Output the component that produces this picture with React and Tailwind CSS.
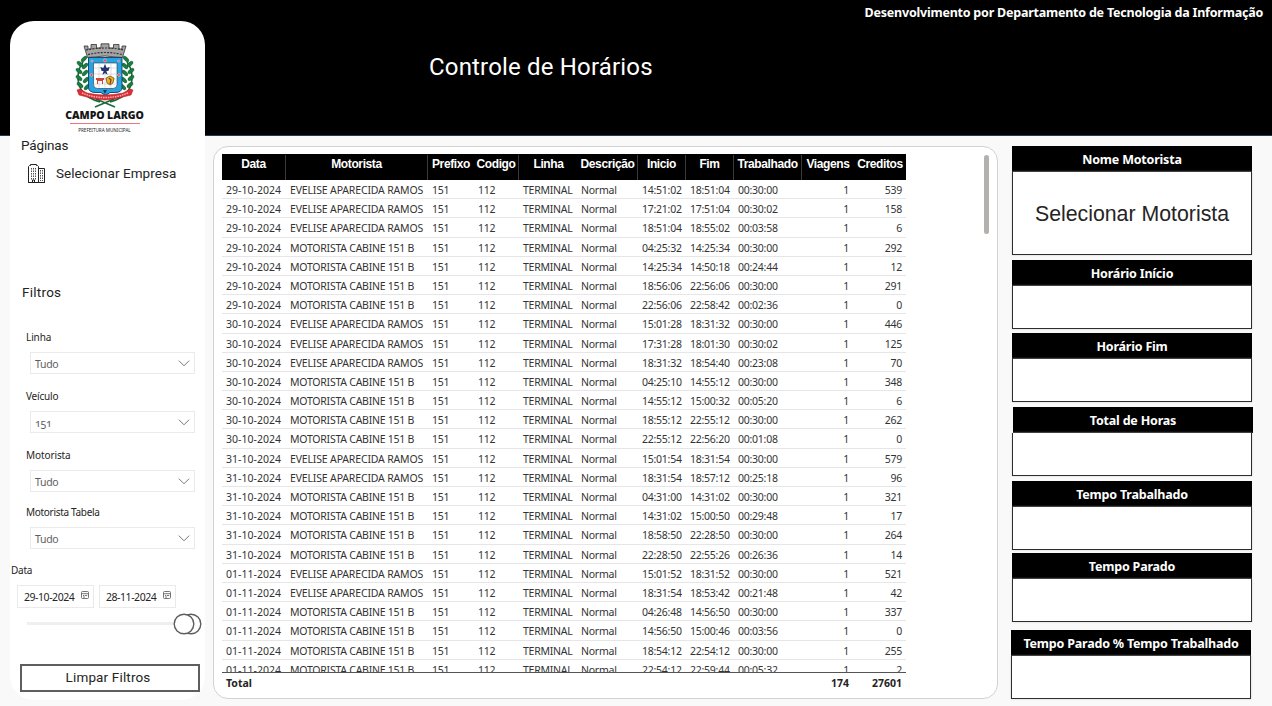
import React from "react";

const EV = "EVELISE APARECIDA RAMOS";
const MC = "MOTORISTA CABINE 151 B";

const rows = [
  ["29-10-2024", EV, "14:51:02", "18:51:04", "00:30:00", "539"],
  ["29-10-2024", EV, "17:21:02", "17:51:04", "00:30:02", "158"],
  ["29-10-2024", EV, "18:51:04", "18:55:02", "00:03:58", "6"],
  ["29-10-2024", MC, "04:25:32", "14:25:34", "00:30:00", "292"],
  ["29-10-2024", MC, "14:25:34", "14:50:18", "00:24:44", "12"],
  ["29-10-2024", MC, "18:56:06", "22:56:06", "00:30:00", "291"],
  ["29-10-2024", MC, "22:56:06", "22:58:42", "00:02:36", "0"],
  ["30-10-2024", EV, "15:01:28", "18:31:32", "00:30:00", "446"],
  ["30-10-2024", EV, "17:31:28", "18:01:30", "00:30:02", "125"],
  ["30-10-2024", EV, "18:31:32", "18:54:40", "00:23:08", "70"],
  ["30-10-2024", MC, "04:25:10", "14:55:12", "00:30:00", "348"],
  ["30-10-2024", MC, "14:55:12", "15:00:32", "00:05:20", "6"],
  ["30-10-2024", MC, "18:55:12", "22:55:12", "00:30:00", "262"],
  ["30-10-2024", MC, "22:55:12", "22:56:20", "00:01:08", "0"],
  ["31-10-2024", EV, "15:01:54", "18:31:54", "00:30:00", "579"],
  ["31-10-2024", EV, "18:31:54", "18:57:12", "00:25:18", "96"],
  ["31-10-2024", MC, "04:31:00", "14:31:02", "00:30:00", "321"],
  ["31-10-2024", MC, "14:31:02", "15:00:50", "00:29:48", "17"],
  ["31-10-2024", MC, "18:58:50", "22:28:50", "00:30:00", "264"],
  ["31-10-2024", MC, "22:28:50", "22:55:26", "00:26:36", "14"],
  ["01-11-2024", EV, "15:01:52", "18:31:52", "00:30:00", "521"],
  ["01-11-2024", EV, "18:31:54", "18:53:42", "00:21:48", "42"],
  ["01-11-2024", MC, "04:26:48", "14:56:50", "00:30:00", "337"],
  ["01-11-2024", MC, "14:56:50", "15:00:46", "00:03:56", "0"],
  ["01-11-2024", MC, "18:54:12", "22:54:12", "00:30:00", "255"],
  ["01-11-2024", MC, "22:54:12", "22:59:44", "00:05:32", "2"],
];

const grid =
  "grid grid-cols-[64px_142px_46px_45px_59px_60px_48px_48px_68px_52px_52px] w-[684px]";

const columns = [
  ["Data", true],
  ["Motorista", true],
  ["Prefixo", false],
  ["Codigo", true],
  ["Linha", false],
  ["Descrição", true],
  ["Inicio", true],
  ["Fim", true],
  ["Trabalhado", true],
  ["Viagens", false],
  ["Creditos", false],
];

function Crest() {
  return (
    <svg className="block h-[66px] w-[60px] shrink-0" viewBox="0 0 60 66">
      <path d="M8 19C2 27 1 39 7 48c4 6 11 9 18 11M52 19c6 8 7 20 1 29-4 6-11 9-18 11" fill="none" stroke="#176b3a" strokeWidth="1.6" />
      <g fill="#17803f" stroke="#0c3c22" strokeWidth=".4">
        {[[9, 16], [5, 21], [10, 23], [4, 28], [10, 30], [4, 35], [11, 37], [5, 42], [12, 44]].map(([x, y], i) => (
          <g key={i}>
            <ellipse cx={x} cy={y} rx="3.6" ry="1.8" transform={`rotate(${i % 2 ? 40 : -45} ${x} ${y})`} />
            <ellipse cx={60 - x} cy={y} rx="3.6" ry="1.8" transform={`rotate(${i % 2 ? -40 : 45} ${60 - x} ${y})`} />
          </g>
        ))}
      </g>
      <path d="M20 64 39 56M40 64 21 56" stroke="#1c6a3c" strokeWidth="1.5" />
      <path d="M9 3h4v3h3V1.500h5.500v3.500h4.500V.8h8V5h4.500V1.500H44V6h3V3h4l-3.500 11.500q-17.500-3-35 0Z" fill="#a4a4a4" stroke="#333" strokeWidth=".8" />
      <path d="M11 7q19-4 38 0M13 11.500q17-4 34 0" fill="none" stroke="#333" strokeWidth="1.200" strokeDasharray="2 1.200" />
      <path d="M13.500 14.500H47v30q0 5-7 5H35l-4.500 3-4.500-3h-5q-7.500 0-7.500-5Z" fill="#27a2e3" stroke="#123c5c" strokeWidth=".9" />
      <path d="M18.500 20H42v21.500q0 4-4 4H22.500q-4 0-4-4Z" fill="#fff" stroke="#234" strokeWidth=".6" />
      <path d="M19 25h22M19 31h22M19 36h22M19 41h22M24 20v25M30 20v25M36 20v25" stroke="#bbb" strokeWidth=".5" />
      <path d="m30 21 1.700 4 3-1-1.300 4h-2l1.200 4-2.600-2-2.600 2 1.200-4h-2l-1.300-4 3 1Z" fill="#25346e" />
      <path d="M21 35h8v2h-1v4h-1v-3h-4v3h-1v-4h-1Z" fill="#d3443d" />
      <path d="m31 35 4-2 4 2-1 5-3 2-3-2Z" fill="#e3bd20" stroke="#5d421a" strokeWidth=".7" />
      <path d="m34 35 2 2-1 4" stroke="#a52b25" strokeWidth="1.200" fill="none" />
      <g fill="#e34b42" stroke="#fff" strokeWidth=".4">
        <circle cx="30" cy="17.400" r="1.500" /><circle cx="16.500" cy="32" r="1.400" /><circle cx="44" cy="32" r="1.400" />
        <circle cx="17" cy="18" r="1" /><circle cx="43.500" cy="18" r="1" />
      </g>
      <path d="m28 47 2 4 2-4Z" fill="#183e60" />
      <path d="m2 47 3-1 7 4q18 4 36 0l7-4 3 1-2 5-8 2q-18 6-36 0l-8-2Z" fill="#df2d35" stroke="#9c1820" strokeWidth=".5" />
      <path d="m7 50 7 2.500q16 4 32 0L53 50" fill="none" stroke="#f4b8ba" strokeWidth="1.400" strokeDasharray="1.500 .9" />
    </svg>
  );
}

function Building() {
  return (
    <svg className="block h-[19px] w-[18px]" viewBox="0 0 18 19" fill="none" stroke="#222" strokeWidth="1">
      <path d="M.5 18.500v-16l1-1h1v-1h6v1h1l1 1v16M10.500 4.500h6v14h-6M0 18.500h17" />
      <path d="M3.500 4v12M5.500 4v12M7.500 4v12M12.500 6v11M14.500 6v11" strokeWidth=".8" strokeDasharray="1.500 1" />
      <path d="M4.500 18v-2h2v2" />
    </svg>
  );
}

function Calendar() {
  return (
    <svg className="-mt-[3px] block size-[8px]" viewBox="0 0 8 8" fill="none" stroke="#666" strokeWidth=".9">
      <rect x=".5" y=".5" width="7" height="7" rx="1" />
      <path d="M.5 2.700h7M2 4.500h1M3.700 4.500h2.500M2 6h2" />
    </svg>
  );
}

function Filter({ label, value, className, tracking }) {
  return (
    <div className={className}>
      <div className={`ml-[16px] h-[16px] whitespace-nowrap text-[10px] leading-[14px] text-[#252423] ${tracking}`}>{label}</div>
      <div className="ml-[20px] mt-[6px] flex h-[22px] w-[165px] items-center justify-between border border-[#eaeaea] pl-[4px] pr-[4px]">
        <span className="pt-[4px] text-[10.5px] tracking-[-0.3px] text-[#605e5c] [font-variant-numeric:oldstyle-nums]">{value}</span>
        <svg className="block h-[7px] w-[12px]" viewBox="0 0 12 7" fill="none" stroke="#777" strokeWidth="1">
          <path d="m.8.6 5.200 5.200L11.200.6" />
        </svg>
      </div>
    </div>
  );
}

function DateBox({ value }) {
  return (
    <div className="flex h-[23px] w-[77px] items-center justify-between border border-[#eaeaea] pl-[6px] pr-[4px]">
      <span className="whitespace-nowrap pt-[3px] text-[10.5px] tracking-[-0.45px] text-[#252423]">{value}</span>
      <Calendar />
    </div>
  );
}

function Sidebar() {
  return (
    <aside className="ml-[10px] mt-[21px] flex h-[679px] w-[195px] shrink-0 flex-col rounded-[24px] bg-white font-['Noto_Sans',sans-serif]">
      <div className="flex h-[114px] flex-col items-center pr-[6px] pt-[22px]">
        <Crest />
        <div className="whitespace-nowrap font-['Open_Sans',sans-serif] text-[10.5px] font-extrabold leading-[13px] tracking-[-0.08px] text-[#161616]">CAMPO LARGO</div>
        <div className="mt-[1px] h-px w-[70px] shrink-0 bg-[#e8797d]" />
        <div className="mt-[3px] whitespace-nowrap text-[4.6px] leading-[6px] text-[#222]">PREFEITURA MUNICIPAL</div>
      </div>
      <div className="ml-[11px] h-[20px] font-[Roboto,sans-serif] text-[13.5px] leading-[20px] tracking-[-0.15px] text-[#252423]">Páginas</div>
      <div className="ml-[18px] mt-[8px] flex h-[20px] items-center gap-[10px]">
        <Building />
        <span className="whitespace-nowrap font-[Roboto,sans-serif] text-[13.5px] tracking-[0.05px] text-[#252423]">Selecionar Empresa</span>
      </div>
      <div className="ml-[12px] mt-[99px] h-[20px] font-[Roboto,sans-serif] text-[13.5px] leading-[20px] tracking-[0.25px] text-[#252423]">Filtros</div>
      <Filter className="mt-[28px] h-[59px]" tracking="tracking-[-0.1px]" label="Linha" value="Tudo" />
      <Filter className="h-[59px]" tracking="tracking-[-0.2px]" label="Veículo" value="151" />
      <Filter className="h-[57px]" tracking="tracking-[-0.1px]" label="Motorista" value="Tudo" />
      <Filter className="h-[58px]" tracking="tracking-[-0.3px]" label="Motorista Tabela" value="Tudo" />
      <div className="ml-px h-[16px] text-[10px] leading-[14px] tracking-[-0.25px] text-[#252423]">Data</div>
      <div className="ml-[7px] mt-[6px] flex gap-[5px]">
        <DateBox value="29-10-2024" />
        <DateBox value="28-11-2024" />
      </div>
      <svg className="ml-[17px] mt-[5px] block h-[22px] w-[175px] shrink-0" viewBox="0 0 175 22">
        <path d="M0 10.500h150" stroke="#efefef" strokeWidth="3" />
        <circle cx="164" cy="11" r="9.800" fill="#fff" stroke="#605e5c" strokeWidth="1.400" />
        <circle cx="157" cy="11" r="9.800" fill="#fff" stroke="#605e5c" strokeWidth="1.400" />
      </svg>
      <button className="ml-[10px] mt-[29px] flex h-[28px] w-[180px] justify-center border-2 border-[#605e5c] bg-white pr-[4px] font-[Roboto,sans-serif] text-[13.5px] leading-[22px] tracking-[0.15px] text-[#252423]">Limpar Filtros</button>
    </aside>
  );
}

function TableCard() {
  return (
    <section className="ml-[8px] mt-[10px] flex h-[553px] w-[785px] shrink-0 justify-between rounded-[15px] border border-[#d2d2d2] bg-white pl-[8px] pr-[8px] pt-[7px] font-['Noto_Sans',sans-serif]">
      <div>
        <div className={`${grid} h-[26px] bg-black pt-px font-['Liberation_Sans',sans-serif] text-[12px] font-bold leading-[18px] tracking-[-0.38px] text-white`}>
          {columns.map(([name, line]) => (
            <div key={name} className={line ? "border-r border-[#3a3a3a] text-center" : "text-center"}>{name}</div>
          ))}
        </div>
        <div className="h-[492px] overflow-hidden">
          {rows.map(([date, driver, start, end, worked, credits], i) => (
            <div key={i} className={`${grid} h-[19.2px] whitespace-nowrap border-b border-[#e6e6e6] text-[10.5px] leading-[20px] tracking-[-0.25px] text-[#333]`}>
              <div className="pl-[4px] tracking-[0.02px]">{date}</div>
              <div className={driver === EV ? "pl-[4px] tracking-[-0.16px]" : "pl-[4px] tracking-[-0.24px]"}>{driver}</div>
              <div className="pl-[4px]">151</div>
              <div className="pl-[4px]">112</div>
              <div className="pl-[4px]">TERMINAL</div>
              <div className="pl-[3px]">Normal</div>
              <div className="pl-[4px]">{start}</div>
              <div className="pl-[4px]">{end}</div>
              <div className="pl-[4px]">{worked}</div>
              <div className="pr-[5px] text-right">1</div>
              <div className="pr-[4px] text-right">{credits}</div>
            </div>
          ))}
        </div>
        <div className="flex h-[22px] w-[684px] border-t border-[#555] text-[10.5px] font-bold leading-[20px] text-[#252423]">
          <span className="grow pl-[4px]">Total</span>
          <span className="w-[60px] pr-[4px] text-right">174</span>
          <span className="w-[53px] pr-[4px] text-right">27601</span>
        </div>
      </div>
      <div className="mt-[1px] h-[79px] w-[5px] rounded-full bg-[#b3b0ad]" />
    </section>
  );
}

function Card({ title, className, headClass = "", children }) {
  return (
    <div className={`flex w-[240px] shrink-0 flex-col ${className}`}>
      <div className={`h-[26px] shrink-0 whitespace-nowrap bg-black text-center font-['Noto_Sans',sans-serif] text-[12.5px] font-bold leading-[28px] tracking-[-0.2px] text-white ${headClass}`}>{title}</div>
      <div className="flex grow items-center justify-center border border-t-0 border-[#2d2d2d] bg-white shadow-[0_0_2px_#ccc]">{children}</div>
    </div>
  );
}

export default function App() {
  return (
    <div className="flex h-[706px] w-[1272px] overflow-hidden bg-[linear-gradient(#000_0_135px,#1c3d5c_135px_136px,#f9f9f9_136px)]">
      <Sidebar />
      <main className="flex grow flex-col">
        <header className="flex h-[136px] shrink-0 flex-col text-white">
          <div className="mt-[4px] self-end whitespace-nowrap pr-[9px] font-['Noto_Sans',sans-serif] text-[12.5px] font-bold leading-[18px] tracking-[-0.22px]">
            Desenvolvimento por Departamento de Tecnologia da Informação
          </div>
          <h1 className="ml-[224px] mt-[29px] whitespace-nowrap font-[Roboto,sans-serif] text-[24px] leading-[32px] tracking-[0.17px]">Controle de Horários</h1>
        </header>
        <div className="flex">
          <TableCard />
          <div className="ml-[14px] flex flex-col pt-[10px]">
            <Card title="Nome Motorista" className="h-[109px]">
              <span className="whitespace-nowrap pt-[2px] font-['Liberation_Sans',sans-serif] text-[21.3px] leading-[24px] text-[#252423]">Selecionar Motorista</span>
            </Card>
            <Card title="Horário Início" className="mt-[5px] h-[69px]" />
            <Card title="Horário Fim" className="mt-[4px] h-[69px]" />
            <Card title="Total de Horas" className="mt-[5px] h-[69px]" headClass="ml-px -mr-px" />
            <Card title="Tempo Trabalhado" className="mt-[5px] h-[69px]" />
            <Card title="Tempo Parado" className="mt-[3px] h-[69px]" />
            <Card title="Tempo Parado % Tempo Trabalhado" className="-ml-px mt-[8px] h-[69px]" />
          </div>
        </div>
      </main>
    </div>
  );
}
